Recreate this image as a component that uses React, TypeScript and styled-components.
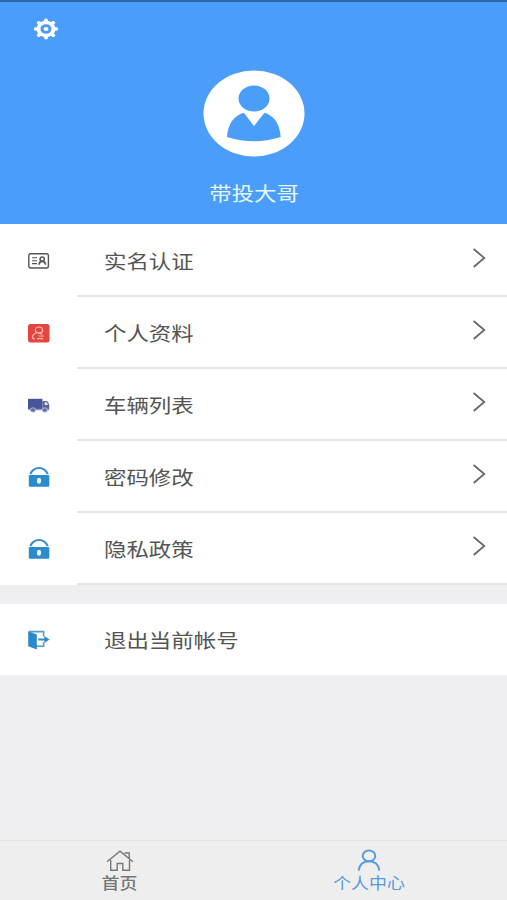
import React from "react";
import styled, { createGlobalStyle } from "styled-components";

const GlobalStyle = createGlobalStyle`
  * { box-sizing: border-box; }
  body {
    margin: 0;
    background: #eeeef3;
    font-family: "Noto Sans CJK SC", "Noto Sans", sans-serif;
  }
`;

const Page = styled.div`
  display: flex;
  flex-direction: column;
  width: 100%;
  height: 100vh;
  overflow: hidden;
  background: #eeeef3;
`;

const Header = styled.header`
  display: flex;
  flex-direction: column;
  flex: none;
  height: 224px;
  border-top: 2px solid #2c66a8;
  background: #4a9df8;
`;

const Toolbar = styled.div`
  height: 68px;
  padding: 16px 0 0 33px;
  line-height: 0;
`;

const Profile = styled.div`
  display: flex;
  flex-direction: column;
  align-items: center;
`;

const UserName = styled.div`
  margin-top: 21px;
  padding-left: 1px;
  font-size: 19.5px;
  line-height: 30px;
  color: #e6f5ff;
  transform: scaleX(1.15);
`;

const Group = styled.section<{ $spaced?: boolean }>`
  flex: none;
  margin-top: ${(p) => (p.$spaced ? "19px" : "0")};
  padding-top: ${(p) => (p.$spaced ? "0" : "1px")};
  background: #fff;
`;

const Row = styled.div<{ $last?: boolean }>`
  display: flex;
  height: ${(p) => (p.$last ? "71px" : "72px")};
`;

const RowIcon = styled.div`
  display: flex;
  align-items: center;
  flex: none;
  width: 77px;
  padding-left: 27px;
`;

const RowBody = styled.div<{ $line?: boolean }>`
  display: flex;
  flex: 1;
  align-items: center;
  justify-content: space-between;
  padding: 0 21px 0 27px;
  border-bottom: ${(p) => (p.$line ? "2px solid #e4e4e6" : "none")};
`;

const Label = styled.span`
  padding-top: 1px;
  font-size: 19.5px;
  line-height: 30px;
  color: #555;
  transform: scaleX(1.15);
  transform-origin: left center;
`;

const Chevron = styled.svg`
  display: block;
  margin-bottom: 5px;
`;

const TabBar = styled.nav`
  display: grid;
  grid-template-columns: 240px 1fr;
  flex: none;
  height: 60px;
  margin-top: auto;
  border-top: 1px solid #e3e3e6;
  background: #eeeeee;
`;

const Tab = styled.div<{ $active?: boolean }>`
  display: flex;
  flex-direction: column;
  align-items: center;
  padding-top: 8px;
  padding-right: ${(p) => (p.$active ? "9px" : "0")};
  color: ${(p) => (p.$active ? "#559be0" : "#777777")};
`;

const TabLabel = styled.span<{ $strong?: boolean }>`
  font-size: 15.5px;
  font-weight: ${(p) => (p.$strong ? 500 : 400)};
  line-height: 21px;
  transform: scaleX(1.155);
`;

const GearIcon = () => (
  <svg width="26" height="22" viewBox="-13 -11 26 22">
    <g transform="scale(1.16 1)" stroke="#fff" fill="none">
      {[0, 45, 90, 135].map((a) => (
        <path key={a} d="M0-8.8V-7.4M0 7.4V8.8" strokeWidth="3.4" strokeLinecap="round" transform={`rotate(${a})`} />
      ))}
      <circle r="6.5" strokeWidth="3.4" />
      <circle r="2.1" fill="#fff" stroke="none" />
    </g>
  </svg>
);

const Avatar = () => (
  <svg width="102" height="87" viewBox="0 0 102 87">
    <ellipse cx="51" cy="43.5" rx="50.5" ry="43" fill="#fff" />
    <ellipse cx="51" cy="28.5" rx="15.5" ry="13" fill="#4a9df8" />
    <path d="M40.8 42.7 51 56 61.5 42.7C71 45.5 77 54 77.7 67Q51 75.5 24 67C24.7 54 31 45.5 40.8 42.7Z" fill="#4a9df8" />
  </svg>
);

const IdCardIcon = () => (
  <svg width="23" height="18" viewBox="0 0 23 18" fill="none" stroke="#555">
    <rect x="1.8" y="1.8" width="19.6" height="14.2" rx="2" strokeWidth="1.4" />
    <path d="M5 5.8h5M5 8.7h5M5 11.6h5" strokeWidth="1.1" />
    <path d="M12 12.8c.2-2.6 1-3.4 3.1-3.4s3.2.8 3.4 3.4" strokeWidth="1.6" />
    <circle cx="15.2" cy="7.2" r="2.1" strokeWidth="1.5" />
  </svg>
);

const ProfileIcon = () => (
  <svg width="23" height="20" viewBox="0 0 23 20" fill="none">
    <rect x="1" y="1" width="21.5" height="18.5" rx="2.5" fill="#e4463f" />
    <g stroke="#ffc0b8" strokeWidth="1.2" strokeLinecap="round">
      <ellipse cx="12" cy="7" rx="3.6" ry="3" />
      <path d="M9.8 9.5C7 10.6 5.7 12.5 5.5 14.2c0 1.2.6 1.6 2 1.6M12 10.2l3 .8M12 13h4.5M10.5 15.7h5" />
    </g>
  </svg>
);

const TruckIcon = () => (
  <svg width="23" height="17" viewBox="0 0 23 17">
    <path d="M1 1.8h14.4v10.4H1Z" fill="#465597" />
    <path d="M15.4 4h3.8c1.2 0 2 .9 2.5 2.4l.5 2v4.2h-6.8Z" fill="#53629f" />
    <path d="M17.6 5.2h1.8c.8.3 1.3 1.3 1.5 2.8h-3.3Z" fill="#dfe4f2" />
    <path d="M1.5 11.8h20.5v1.4h-20.5Z" fill="#8993bd" />
    <ellipse cx="6" cy="13" rx="2.7" ry="2.2" fill="#6471a8" stroke="#c5cbe2" strokeWidth=".8" />
    <ellipse cx="17.8" cy="13" rx="2.7" ry="2.2" fill="#6471a8" stroke="#c5cbe2" strokeWidth=".8" />
  </svg>
);

const LockIcon = () => (
  <svg width="23" height="22" viewBox="0 0 23 22">
    <path d="M3.3 8.2C5 4 8 2 12 2s7 2 8.7 6.2" fill="none" stroke="#348fc9" strokeWidth="2" />
    <rect x="1.8" y="9" width="20.5" height="11.7" rx="1.2" fill="#2c8bcb" />
    <ellipse cx="12" cy="14.8" rx="2.1" ry="3" fill="#e9f5fc" />
  </svg>
);

const ExitIcon = () => (
  <svg width="23" height="22" viewBox="0 0 23 22">
    <path d="M2 2.6h14.6v5M16.6 13.3v4H9" fill="none" stroke="#559fcd" strokeWidth="1.6" />
    <path d="M1.2 2.2 9.8 5.4v15.2L1.2 17.2Z" fill="#2989c9" />
    <path d="M11.3 10.5h7" stroke="#348bc5" strokeWidth="2" />
    <path d="M17.3 7 22.6 10.5 17.3 14Z" fill="#348bc5" />
  </svg>
);

const HomeIcon = () => (
  <svg width="28" height="23" viewBox="0 0 28 23" fill="none" stroke="currentColor" strokeWidth="1.4">
    <path d="M1 12.7 14 2.2 27 12.7M18.5 4h4.7v5.5M4.7 11v10.3h6.5v-6.8h5.6v6.8h6.7V11" />
  </svg>
);

const PersonIcon = () => (
  <svg width="24" height="23" viewBox="0 0 24 23" fill="none" stroke="currentColor" strokeWidth="2">
    <ellipse cx="12" cy="6.9" rx="6.3" ry="5.4" />
    <path d="M1.6 21.5C2.5 15.7 6.2 12.3 12 12.3s9.5 3.4 10.4 9.2" />
  </svg>
);

const ITEMS = [
  { label: "实名认证", Icon: IdCardIcon },
  { label: "个人资料", Icon: ProfileIcon },
  { label: "车辆列表", Icon: TruckIcon },
  { label: "密码修改", Icon: LockIcon },
  { label: "隐私政策", Icon: LockIcon },
];

export default function App() {
  return (
    <Page>
      <GlobalStyle />
      <Header>
        <Toolbar>
          <GearIcon />
        </Toolbar>
        <Profile>
          <Avatar />
          <UserName>带投大哥</UserName>
        </Profile>
      </Header>
      <Group>
        {ITEMS.map(({ label, Icon }) => (
          <Row key={label}>
            <RowIcon>
              <Icon />
            </RowIcon>
            <RowBody $line>
              <Label>{label}</Label>
              <Chevron width="14" height="20" viewBox="0 0 14 20" fill="none" stroke="#666" strokeWidth="1.7">
                <path d="M1.7 1 12.3 10 1.7 19" />
              </Chevron>
            </RowBody>
          </Row>
        ))}
      </Group>
      <Group $spaced>
        <Row $last>
          <RowIcon>
            <ExitIcon />
          </RowIcon>
          <RowBody>
            <Label>退出当前帐号</Label>
          </RowBody>
        </Row>
      </Group>
      <TabBar>
        <Tab>
          <HomeIcon />
          <TabLabel $strong>首页</TabLabel>
        </Tab>
        <Tab $active>
          <PersonIcon />
          <TabLabel>个人中心</TabLabel>
        </Tab>
      </TabBar>
    </Page>
  );
}
